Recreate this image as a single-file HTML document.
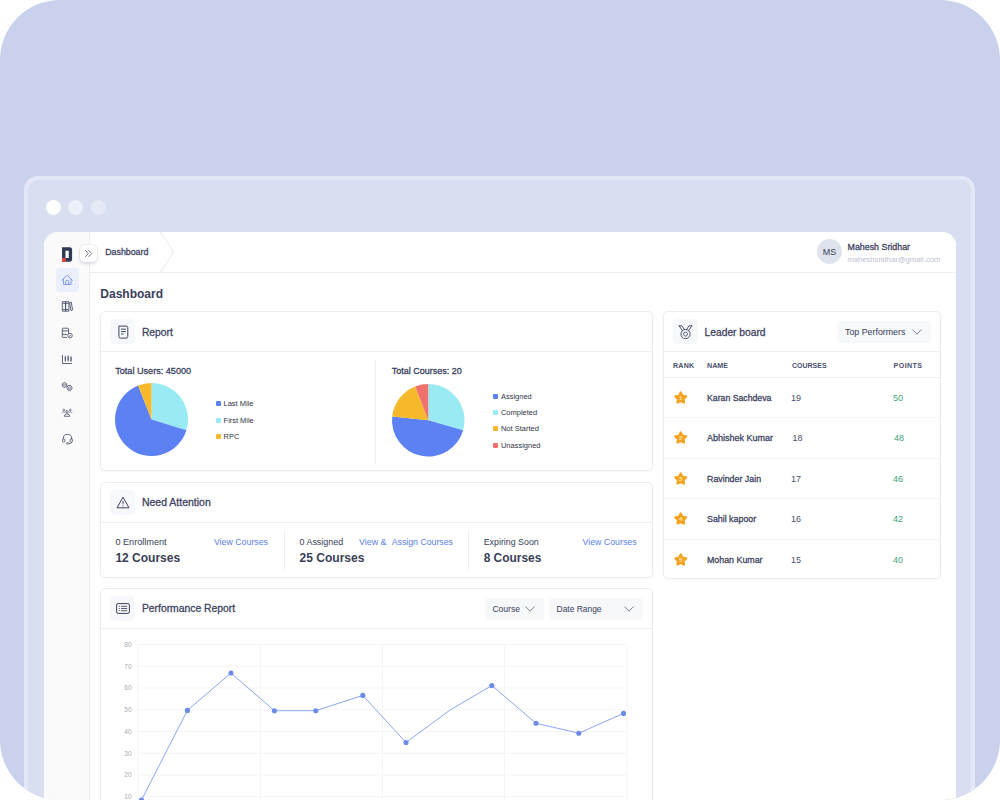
<!DOCTYPE html>
<html lang="en">
<head>
<meta charset="utf-8">
<title>Dashboard</title>
<style>
*{box-sizing:border-box;margin:0;padding:0}
html,body{width:1000px;height:800px;overflow:hidden;background:#fff}
body{font-family:"Liberation Sans",sans-serif;color:#343a55;position:relative}
.stage{position:absolute;left:0;top:0;width:1000px;height:800px;background:#cad1ed;border-radius:60px;overflow:hidden}
.frame{position:absolute;left:24px;top:176px;width:951px;height:700px;background:#d9def1;border:4px solid #e4e8f6;border-radius:14px}
.dot{position:absolute;top:200px;width:15px;height:15px;border-radius:50%;background:#fff}
.win{position:absolute;left:44px;top:232px;width:912px;height:600px;background:#fff;border-radius:14px 14px 0 0;overflow:hidden}
.side{position:absolute;left:0;top:0;width:46px;height:600px;background:#fafafb;border-right:1px solid #eeeff3}
.top{position:absolute;left:46px;top:0;width:866px;height:41px;border-bottom:1px solid #eeeff3;background:#fff}
.t{position:absolute;white-space:nowrap;line-height:1}
.m{-webkit-text-stroke:.28px currentColor}
.card{position:absolute;background:#fff;border:1px solid #ebedf2;border-radius:5px;box-shadow:0 1px 2px rgba(40,50,100,.035)}
.hd{position:absolute;left:0;right:0;top:0;height:40px;border-bottom:1px solid #eceef3}
.ib{position:absolute;left:9px;top:7px;width:25px;height:25px;border-radius:5px;background:#f7f8fb}
.dd{position:absolute;height:22px;border-radius:4px;background:#f7f8fa}
.vl{position:absolute;width:1px;background:#edeff4}
.d{color:#3c4260}
.b{color:#383e5a}
.lk{color:#5b80e8}
.big{color:#394058}
.lg{color:#2f3445}
.sq{position:absolute;width:5px;height:5px;border-radius:1px}
.th{font-weight:bold;color:#4a5070}
.nu{color:#4a5070}
.pt{color:#3fa47c}
.rl{position:absolute;height:1px;background:#f4f5f8}
svg{position:absolute;overflow:visible}
</style>
</head>
<body>
<div class="stage">
  <div class="frame"></div>
  <div class="dot" style="left:45.6px"></div>
  <div class="dot" style="left:68.4px;opacity:.55"></div>
  <div class="dot" style="left:91px;opacity:.35"></div>
  <div class="win"><div class="side"></div><div class="top"></div></div>

  <!-- SIDEBAR -->
  <svg style="left:62px;top:247px" width="11" height="15" viewBox="0 0 11 15"><path d="M0 .25 H7.6 Q10.1 .25 10.1 2.75 V12.6 Q10.1 14.75 7.9 14.75 H0 Z" fill="#303a56"/><rect x="3.5" y="3.75" width="3.25" height="7.25" fill="#fff"/><rect x="0" y="10.9" width="3.7" height="3.85" fill="#e6453b"/></svg>
  <div style="position:absolute;left:55.8px;top:268px;width:23px;height:23.8px;border-radius:4px;background:#ebeffc"></div>
  <svg style="left:61px;top:274px" width="12" height="12" viewBox="0 0 12 12"><path d="M.9 6.3 L6.2 1.2 L11.4 6.3 M2.4 5.2 V10.4 H10 V5.2 M4.7 10.4 V7.6 Q4.7 6.2 6.2 6.2 Q7.7 6.2 7.7 7.6 V10.4" fill="none" stroke="#6386ea" stroke-width=".8" stroke-linecap="round" stroke-linejoin="round"/></svg>
  <svg style="left:61px;top:300px" width="13" height="13" viewBox="0 0 13 13"><path d="M1.3 1.7 H4.6 V11.2 H1.3 Z M4.6 1.7 H7.9 V11.2 H4.6 Z M1.3 3.3 H7.9 M1.3 9.6 H7.9 M8.6 2.6 L10.2 2 L11.6 9.9 L10 10.6 Z" fill="none" stroke="#454b66" stroke-width=".85" stroke-linejoin="round"/></svg>
  <svg style="left:61px;top:327px" width="13" height="13" viewBox="0 0 13 13"><path d="M7.6 6.6 V2 Q7.6 1.2 6.8 1.2 H2.1 Q1.3 1.2 1.3 2 V9.6 Q1.3 10.4 2.1 10.4 H6 M1.3 3.9 H7.6 M1.3 7.4 H6" fill="none" stroke="#454b66" stroke-width=".85" stroke-linejoin="round"/><circle cx="9" cy="8.6" r="2.3" fill="none" stroke="#454b66" stroke-width=".8"/><path d="M8 8.7 L8.8 9.4 L10 7.9" fill="none" stroke="#454b66" stroke-width=".7"/></svg>
  <svg style="left:61px;top:354px" width="13" height="12" viewBox="0 0 13 12"><path d="M1.45 1 V9.5 H11" fill="none" stroke="#454b66" stroke-width=".85"/><path d="M4.4 1.6 V8 M7.2 1.4 V7.8 M10 1.8 V8" stroke="#5d627a" stroke-width=".6"/><path d="M4.4 3 V6.6 M7.2 2.6 V6.2 M10 3.4 V6.8" stroke="#5d627a" stroke-width="1.3" stroke-linecap="round"/></svg>
  <svg style="left:61px;top:381px" width="13" height="12" viewBox="0 0 13 12"><path d="M5.67 5.25 L3.50 6.50 L1.33 5.25 L1.33 2.75 L3.50 1.50 L5.67 2.75 Z" fill="none" stroke="#454b66" stroke-width=".8" stroke-linejoin="round"/><circle cx="3.5" cy="4" r="1" fill="none" stroke="#454b66" stroke-width=".6"/><path d="M11.20 6.80 L9.85 9.14 L7.15 9.14 L5.80 6.80 L7.15 4.46 L9.85 4.46 Z" fill="none" stroke="#454b66" stroke-width=".8" stroke-linejoin="round"/><circle cx="8.5" cy="6.8" r="1.1" fill="none" stroke="#454b66" stroke-width=".6"/><path d="M7.3 9.6 V10.2 M9.7 9.6 V10.2" stroke="#454b66" stroke-width=".6"/></svg>
  <svg style="left:61px;top:407px" width="13" height="12" viewBox="0 0 13 12"><circle cx="6.05" cy="4.9" r="1.25" fill="none" stroke="#454b66" stroke-width=".75"/><path d="M3.2 9.3 Q3.5 6.9 6.05 6.9 Q8.6 6.9 8.9 9.3 Z" fill="none" stroke="#454b66" stroke-width=".75" stroke-linejoin="round"/><circle cx="2.8" cy="3" r=".9" fill="none" stroke="#454b66" stroke-width=".65"/><circle cx="9.3" cy="3" r=".9" fill="none" stroke="#454b66" stroke-width=".65"/><path d="M1 5.9 Q1.4 4.7 2.8 4.7 L3.9 5.6 M11.1 5.9 Q10.7 4.7 9.3 4.7 L8.2 5.6" fill="none" stroke="#454b66" stroke-width=".65"/></svg>
  <svg style="left:61px;top:433px" width="13" height="13" viewBox="0 0 13 13"><path d="M2.3 6.4 V5.4 Q2.3 1.4 6.5 1.4 Q10.7 1.4 10.7 5.4 V6.4" fill="none" stroke="#454b66" stroke-width=".85"/><rect x="1.6" y="5.8" width="2.2" height="3.4" rx=".9" fill="none" stroke="#454b66" stroke-width=".75"/><rect x="9.2" y="5.8" width="2.2" height="3.4" rx=".9" fill="none" stroke="#454b66" stroke-width=".75"/><path d="M10.7 9.2 Q10.7 10.4 9.2 10.4 H7.8" fill="none" stroke="#454b66" stroke-width=".75"/><rect x="5.5" y="9.7" width="2.5" height="1.4" rx=".7" fill="none" stroke="#454b66" stroke-width=".75"/></svg>

  <!-- TOPBAR -->
  <svg style="left:155px;top:232px" width="24" height="41" viewBox="0 0 24 41"><path d="M5.3 0 L18.6 20 L5.3 40.5" fill="none" stroke="#e6e8ef" stroke-width="1"/></svg>
  <div class="t d m" style="left:105.20px;top:248.00px;font-size:8.83px;">Dashboard</div>
  <div style="position:absolute;left:80.4px;top:244.7px;width:17px;height:17px;border-radius:4.5px;background:#fff;box-shadow:0 0 0 .6px #e4e5ec,0 1.5px 3px rgba(60,70,110,.22)"></div>
  <svg style="left:83.4px;top:247.5px" width="11" height="11" viewBox="0 0 11 11"><path d="M2.2 2.2 L5.3 5.5 L2.2 8.8 M5.5 2.2 L8.7 5.5 L5.5 8.8" fill="none" stroke="#5a607a" stroke-width=".9"/></svg>
  <div style="position:absolute;left:816.7px;top:239.2px;width:25.2px;height:25.2px;border-radius:50%;background:#dfe3ec"></div>
  <div class="t d" style="left:822.70px;top:248.00px;font-size:9.0px;">MS</div>
  <div class="t d m" style="left:847.50px;top:243.00px;font-size:8.87px;">Mahesh Sridhar</div>
  <div class="t " style="left:847.50px;top:256.00px;font-size:7.61px;color:#bcc1d2;">maheshsridhar@gmail.com</div>
  <div class="t " style="left:100.30px;top:288.00px;font-size:12.02px;font-weight:bold;color:#3a405a;">Dashboard</div>

  <!-- REPORT -->
  <div class="card" style="left:100px;top:311px;width:553px;height:160px">
    <div class="hd"></div><div class="ib"></div>
    <svg style="left:16px;top:13px" width="12" height="14" viewBox="0 0 12 14"><path d="M1.9 1.1 H9.2 Q10.8 1.1 10.8 2.7 V11.5 Q10.8 13.1 9.2 13.1 H3.5 Q1.9 13.1 1.9 11.5 Z" fill="none" stroke="#3c4260" stroke-width="1"/><path d="M4 4.2 H8.8 M4 6.6 H8.8 M4 9 H6.6" stroke="#3c4260" stroke-width="1"/></svg>
  </div>
  <div class="t d m" style="left:141.90px;top:328.00px;font-size:10.3px;">Report</div>
  <div class="t b m" style="left:115.20px;top:367.00px;font-size:9.12px;">Total Users: 45000</div>
  <svg style="left:114.6px;top:382.8px" width="73" height="73" viewBox="0 0 73 73"><path d="M36.5 36.5 L36.50 0.00 A36.5 36.5 0 0 1 71.41 47.17 Z" fill="#9aeaf4"/><path d="M36.5 36.5 L71.41 47.17 A36.5 36.5 0 1 1 23.12 2.54 Z" fill="#5c81f3"/><path d="M36.5 36.5 L23.12 2.54 A36.5 36.5 0 0 1 36.50 0.00 Z" fill="#f7b92c"/></svg>
  <div class="sq" style="left:215.6px;top:401.1px;background:#5c81f3"></div><div class="t lg" style="left:223.60px;top:400.00px;font-size:7.45px;">Last Mile</div>
  <div class="sq" style="left:215.6px;top:417.5px;background:#9aeaf4"></div><div class="t lg" style="left:223.60px;top:417.00px;font-size:7.45px;">First Mile</div>
  <div class="sq" style="left:215.6px;top:433.9px;background:#f7b92c"></div><div class="t lg" style="left:223.60px;top:433.00px;font-size:7.45px;">RPC</div>
  <div class="vl" style="left:375.4px;top:360px;height:104px"></div>
  <div class="t b m" style="left:391.70px;top:367.00px;font-size:9.03px;">Total Courses: 20</div>
  <svg style="left:391.7px;top:383.8px" width="72.5" height="72.5" viewBox="0 0 73 73"><path d="M36.5 36.5 L36.50 0.00 A36.5 36.5 0 0 1 71.59 46.56 Z" fill="#9aeaf4"/><path d="M36.5 36.5 L71.59 46.56 A36.5 36.5 0 0 1 0.20 32.68 Z" fill="#5c81f3"/><path d="M36.5 36.5 L0.20 32.68 A36.5 36.5 0 0 1 23.42 2.42 Z" fill="#f7b92c"/><path d="M36.5 36.5 L23.42 2.42 A36.5 36.5 0 0 1 36.50 0.00 Z" fill="#f0716d"/></svg>
  <div class="sq" style="left:493.1px;top:393.5px;background:#5c81f3"></div><div class="t lg" style="left:500.90px;top:393.00px;font-size:7.5px;">Assigned</div>
  <div class="sq" style="left:493.1px;top:409.9px;background:#9aeaf4"></div><div class="t lg" style="left:500.90px;top:409.00px;font-size:7.5px;">Completed</div>
  <div class="sq" style="left:493.1px;top:426.4px;background:#f7b92c"></div><div class="t lg" style="left:500.90px;top:425.00px;font-size:7.5px;">Not Started</div>
  <div class="sq" style="left:493.1px;top:442.9px;background:#f0716d"></div><div class="t lg" style="left:500.90px;top:442.00px;font-size:7.5px;">Unassigned</div>

  <!-- ATTENTION -->
  <div class="card" style="left:100px;top:482px;width:553px;height:96px">
    <div class="hd"></div><div class="ib"></div>
    <svg style="left:15px;top:12.5px" width="14" height="13" viewBox="0 0 14 13"><path d="M7 1.2 L13 11.8 H1 Z" fill="none" stroke="#3c4260" stroke-width="1" stroke-linejoin="round"/><path d="M7 4.8 V8.2 M7 9.4 V10.4" stroke="#3c4260" stroke-width="1"/></svg>
  </div>
  <div class="t d m" style="left:141.90px;top:497.00px;font-size:10.5px;">Need Attention</div>
  <div class="t b" style="left:115.40px;top:538.00px;font-size:9.14px;">0 Enrollment</div>
  <div class="t big" style="left:115.40px;top:552.00px;font-size:12.0px;font-weight:bold;">12 Courses</div>
  <div class="t lk" style="left:213.90px;top:538.00px;font-size:8.81px;">View Courses</div>
  <div class="vl" style="left:283.6px;top:530px;height:40px"></div>
  <div class="t b" style="left:299.50px;top:538.00px;font-size:8.93px;">0 Assigned</div>
  <div class="t big" style="left:299.50px;top:552.00px;font-size:12.05px;font-weight:bold;">25 Courses</div>
  <div class="t lk" style="left:359.00px;top:538.00px;font-size:8.88px;">View &amp;</div>
  <div class="t lk" style="left:391.70px;top:538.00px;font-size:8.75px;">Assign Courses</div>
  <div class="vl" style="left:467.9px;top:530px;height:40px"></div>
  <div class="t b" style="left:483.70px;top:538.00px;font-size:8.85px;">Expiring Soon</div>
  <div class="t big" style="left:483.70px;top:553.00px;font-size:11.91px;font-weight:bold;">8 Courses</div>
  <div class="t lk" style="left:582.50px;top:538.00px;font-size:8.81px;">View Courses</div>

  <!-- PERF -->
  <div class="card" style="left:100px;top:588px;width:553px;height:260px">
    <div class="hd"></div><div class="ib"></div>
    <svg style="left:15px;top:14px" width="14" height="11" viewBox="0 0 14 11"><rect x=".6" y=".6" width="12.8" height="9.8" rx="1.5" fill="none" stroke="#3c4260" stroke-width="1"/><path d="M2.8 3.3 H3.8 M5 3.3 H11.2 M2.8 5.5 H3.8 M5 5.5 H11.2 M2.8 7.7 H3.8 M5 7.7 H11.2" stroke="#3c4260" stroke-width=".85"/></svg>
    <div class="dd" style="left:384px;top:9px;width:58.5px"></div>
    <div class="dd" style="left:447.5px;top:9px;width:94px"></div>
  </div>
  <div class="t d m" style="left:141.90px;top:604.00px;font-size:10.36px;">Performance Report</div>
  <div class="t b" style="left:492.40px;top:605.00px;font-size:8.56px;">Course</div>
  <svg style="left:525px;top:605.5px" width="10" height="6" viewBox="0 0 10 6"><path d="M.5 .6 L5 5.2 L9.5 .6" fill="none" stroke="#6a708a" stroke-width=".9"/></svg>
  <div class="t b" style="left:556.60px;top:605.00px;font-size:8.43px;">Date Range</div>
  <svg style="left:623.5px;top:605.5px" width="10" height="6" viewBox="0 0 10 6"><path d="M.5 .6 L5 5.2 L9.5 .6" fill="none" stroke="#6a708a" stroke-width=".9"/></svg>
  <svg style="left:0;top:0" width="1000" height="800" viewBox="0 0 1000 800"><path d="M138 644.50 H627" stroke="#f4f5f8" stroke-width="1"/><path d="M138 666.25 H627" stroke="#f4f5f8" stroke-width="1"/><path d="M138 688.00 H627" stroke="#f4f5f8" stroke-width="1"/><path d="M138 709.75 H627" stroke="#f4f5f8" stroke-width="1"/><path d="M138 731.50 H627" stroke="#f4f5f8" stroke-width="1"/><path d="M138 753.25 H627" stroke="#f4f5f8" stroke-width="1"/><path d="M138 775.00 H627" stroke="#f4f5f8" stroke-width="1"/><path d="M138 796.75 H627" stroke="#f4f5f8" stroke-width="1"/><path d="M138 644 V800" stroke="#f4f5f8" stroke-width="1"/><path d="M260.5 644 V800" stroke="#f4f5f8" stroke-width="1"/><path d="M382.5 644 V800" stroke="#f4f5f8" stroke-width="1"/><path d="M504.5 644 V800" stroke="#f4f5f8" stroke-width="1"/><path d="M627 644 V800" stroke="#f4f5f8" stroke-width="1"/><text x="131.5" y="646.80" text-anchor="end" font-size="6.5" fill="#a8aab2" font-family="Liberation Sans, sans-serif">80</text><text x="131.5" y="668.55" text-anchor="end" font-size="6.5" fill="#a8aab2" font-family="Liberation Sans, sans-serif">70</text><text x="131.5" y="690.30" text-anchor="end" font-size="6.5" fill="#a8aab2" font-family="Liberation Sans, sans-serif">60</text><text x="131.5" y="712.05" text-anchor="end" font-size="6.5" fill="#a8aab2" font-family="Liberation Sans, sans-serif">50</text><text x="131.5" y="733.80" text-anchor="end" font-size="6.5" fill="#a8aab2" font-family="Liberation Sans, sans-serif">40</text><text x="131.5" y="755.55" text-anchor="end" font-size="6.5" fill="#a8aab2" font-family="Liberation Sans, sans-serif">30</text><text x="131.5" y="777.30" text-anchor="end" font-size="6.5" fill="#a8aab2" font-family="Liberation Sans, sans-serif">20</text><text x="131.5" y="799.05" text-anchor="end" font-size="6.5" fill="#a8aab2" font-family="Liberation Sans, sans-serif">10</text><path d="M141.5 800 L187.4 710.4 L231 673 L274.4 710.7 L315.8 710.7 L362.8 695.4 L406 742.5 L449.5 710.4 L491.8 685.5 L536 723.3 L578.8 733.2 L623.5 713.4" fill="none" stroke="#809cee" stroke-width=".9"/><circle cx="141.5" cy="800" r="2.55" fill="#6a8be8"/><circle cx="187.4" cy="710.4" r="2.55" fill="#6a8be8"/><circle cx="231" cy="673" r="2.55" fill="#6a8be8"/><circle cx="274.4" cy="710.7" r="2.55" fill="#6a8be8"/><circle cx="315.8" cy="710.7" r="2.55" fill="#6a8be8"/><circle cx="362.8" cy="695.4" r="2.55" fill="#6a8be8"/><circle cx="406" cy="742.5" r="2.55" fill="#6a8be8"/><circle cx="491.8" cy="685.5" r="2.55" fill="#6a8be8"/><circle cx="536" cy="723.3" r="2.55" fill="#6a8be8"/><circle cx="578.8" cy="733.2" r="2.55" fill="#6a8be8"/><circle cx="623.5" cy="713.4" r="2.55" fill="#6a8be8"/></svg>

  <!-- LEADER -->
  <div class="card" style="left:663px;top:311px;width:278px;height:268px">
    <div class="hd"></div><div class="ib"></div>
    <svg style="left:14px;top:12.8px" width="15" height="15" viewBox="0 0 15 15"><path d="M1.2 .8 H4 L6.4 4.6 M1.2 .8 L4.3 5.6 M13.8 .8 H11 L8.6 4.6 M13.8 .8 L10.7 5.6" fill="none" stroke="#3c4260" stroke-width=".9" stroke-linecap="round" stroke-linejoin="round"/><circle cx="7.5" cy="9.1" r="4.6" fill="none" stroke="#3c4260" stroke-width=".9"/><circle cx="7.5" cy="9.1" r="2" fill="none" stroke="#3c4260" stroke-width=".8"/></svg>
    <div class="dd" style="left:173.5px;top:9px;width:93px"></div>
    <div style="position:absolute;left:0;right:0;top:65px;height:1px;background:#eceef3"></div>
  </div>
  <div class="t d m" style="left:704.60px;top:328.00px;font-size:10.25px;">Leader board</div>
  <div class="t b" style="left:845.00px;top:328.00px;font-size:8.84px;">Top Performers</div>
  <svg style="left:912px;top:328.7px" width="10" height="6" viewBox="0 0 10 6"><path d="M.5 .6 L5 5.2 L9.5 .6" fill="none" stroke="#6a708a" stroke-width=".9"/></svg>
  <div class="t th" style="left:673.00px;top:363.00px;font-size:7.1px;letter-spacing:.25px;">RANK</div>
  <div class="t th" style="left:707.00px;top:363.00px;font-size:7.1px;letter-spacing:.05px;">NAME</div>
  <div class="t th" style="left:792.00px;top:362.00px;font-size:7.0px;">COURSES</div>
  <div class="t th" style="left:893.60px;top:363.00px;font-size:7.1px;letter-spacing:.4px;">POINTS</div>
  <svg style="left:673.9px;top:390.7px" width="13.5" height="13.5" viewBox="0 0 13.5 13.5"><path d="M6.75 1.50 L8.45 4.75 L12.08 5.37 L9.51 8.00 L10.04 11.63 L6.75 10.00 L3.46 11.63 L3.99 8.00 L1.42 5.37 L5.05 4.75 Z" fill="#f3a31f" stroke="#f3a31f" stroke-width="2.2" stroke-linejoin="round"/><text x="6.75" y="9.4" text-anchor="middle" font-size="6" font-weight="bold" fill="#fde3b0" font-family="Liberation Sans, sans-serif">1</text></svg>
  <div class="t d m" style="left:707.00px;top:394.00px;font-size:8.71px;">Karan Sachdeva</div>
  <div class="t nu" style="left:791.00px;top:394.00px;font-size:9.0px;">19</div>
  <div class="t pt" style="left:893.00px;top:394.00px;font-size:9.0px;">50</div>
  <div class="rl" style="left:664px;width:276px;top:417.0px"></div>
  <svg style="left:673.9px;top:431.2px" width="13.5" height="13.5" viewBox="0 0 13.5 13.5"><path d="M6.75 1.50 L8.45 4.75 L12.08 5.37 L9.51 8.00 L10.04 11.63 L6.75 10.00 L3.46 11.63 L3.99 8.00 L1.42 5.37 L5.05 4.75 Z" fill="#f3a31f" stroke="#f3a31f" stroke-width="2.2" stroke-linejoin="round"/><text x="6.75" y="9.4" text-anchor="middle" font-size="6" font-weight="bold" fill="#fde3b0" font-family="Liberation Sans, sans-serif">2</text></svg>
  <div class="t d m" style="left:707.00px;top:434.00px;font-size:8.99px;">Abhishek Kumar</div>
  <div class="t nu" style="left:792.40px;top:434.00px;font-size:9.0px;">18</div>
  <div class="t pt" style="left:894.00px;top:434.00px;font-size:9.0px;">48</div>
  <div class="rl" style="left:664px;width:276px;top:457.5px"></div>
  <svg style="left:673.9px;top:471.7px" width="13.5" height="13.5" viewBox="0 0 13.5 13.5"><path d="M6.75 1.50 L8.45 4.75 L12.08 5.37 L9.51 8.00 L10.04 11.63 L6.75 10.00 L3.46 11.63 L3.99 8.00 L1.42 5.37 L5.05 4.75 Z" fill="#f3a31f" stroke="#f3a31f" stroke-width="2.2" stroke-linejoin="round"/><text x="6.75" y="9.4" text-anchor="middle" font-size="6" font-weight="bold" fill="#fde3b0" font-family="Liberation Sans, sans-serif">3</text></svg>
  <div class="t d m" style="left:707.00px;top:475.00px;font-size:8.85px;">Ravinder Jain</div>
  <div class="t nu" style="left:791.00px;top:475.00px;font-size:9.0px;">17</div>
  <div class="t pt" style="left:893.00px;top:475.00px;font-size:9.0px;">46</div>
  <div class="rl" style="left:664px;width:276px;top:498.0px"></div>
  <svg style="left:673.9px;top:512.2px" width="13.5" height="13.5" viewBox="0 0 13.5 13.5"><path d="M6.75 1.50 L8.45 4.75 L12.08 5.37 L9.51 8.00 L10.04 11.63 L6.75 10.00 L3.46 11.63 L3.99 8.00 L1.42 5.37 L5.05 4.75 Z" fill="#f3a31f" stroke="#f3a31f" stroke-width="2.2" stroke-linejoin="round"/><text x="6.75" y="9.4" text-anchor="middle" font-size="6" font-weight="bold" fill="#fde3b0" font-family="Liberation Sans, sans-serif">4</text></svg>
  <div class="t d m" style="left:707.00px;top:515.00px;font-size:8.85px;">Sahil kapoor</div>
  <div class="t nu" style="left:791.00px;top:515.00px;font-size:9.0px;">16</div>
  <div class="t pt" style="left:893.00px;top:515.00px;font-size:9.0px;">42</div>
  <div class="rl" style="left:664px;width:276px;top:538.5px"></div>
  <svg style="left:673.9px;top:552.7px" width="13.5" height="13.5" viewBox="0 0 13.5 13.5"><path d="M6.75 1.50 L8.45 4.75 L12.08 5.37 L9.51 8.00 L10.04 11.63 L6.75 10.00 L3.46 11.63 L3.99 8.00 L1.42 5.37 L5.05 4.75 Z" fill="#f3a31f" stroke="#f3a31f" stroke-width="2.2" stroke-linejoin="round"/><text x="6.75" y="9.4" text-anchor="middle" font-size="6" font-weight="bold" fill="#fde3b0" font-family="Liberation Sans, sans-serif">5</text></svg>
  <div class="t d m" style="left:707.00px;top:556.00px;font-size:8.85px;">Mohan Kumar</div>
  <div class="t nu" style="left:791.00px;top:556.00px;font-size:9.0px;">15</div>
  <div class="t pt" style="left:893.00px;top:556.00px;font-size:9.0px;">40</div>
</div>
</body>
</html>
